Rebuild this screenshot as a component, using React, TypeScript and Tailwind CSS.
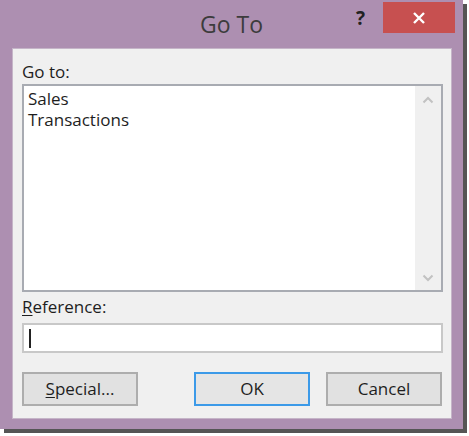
import React from 'react';

const font = { fontFamily: '"Open Sans", "Noto Sans", "Liberation Sans", sans-serif' };

const Chevron = ({ up }: { up?: boolean }) => (
  <svg width="12" height="8" viewBox="0 0 12 8" fill="none">
    <path
      d={up ? 'M1.5 6.5 L6 2 L10.5 6.5' : 'M1.5 1.5 L6 6 L10.5 1.5'}
      stroke="#c2c2c2"
      strokeWidth="2"
    />
  </svg>
);

const DialogButton = ({ children, active }: { children: React.ReactNode; active?: boolean }) => (
  <button
    className={
      active
        ? 'h-[34px] w-[116px] border-2 border-[#3c9ae8] bg-[#e5e5e5] text-[17px] font-medium text-[#1e1e1e]'
        : 'h-[34px] w-[116px] border-2 border-[#adadad] bg-[#e1e1e1] text-[17px] font-medium text-[#1e1e1e]'
    }
  >
    {children}
  </button>
);

export default function App() {
  return (
    <div className="w-[469px] h-[436px] bg-white" style={font}>
      <div className="w-[463px] h-[429px] bg-[#ad8fb1] shadow-[4px_4px_0_#555] flex flex-col">
        {/* Title bar */}
        <div className="relative h-[48px] flex">
          <div className="flex-1 flex items-start justify-center pt-[7px]">
            <span className="text-[23px] text-[#3c3c3c] leading-[34px]">Go To</span>
          </div>
          <div className="absolute left-[356px] top-[4px] text-[19px] font-bold text-[#222]">?</div>
          <div className="absolute left-[383px] top-[2px] w-[72px] h-[31px] bg-[#c75050] flex items-center justify-center">
            <svg width="14" height="14" viewBox="0 0 14 14">
              <path d="M2 2 L12 12 M12 2 L2 12" stroke="#ffffff" strokeWidth="2.4" />
            </svg>
          </div>
        </div>

        {/* Body */}
        <div className="ml-[12px] w-[440px] h-[371px] bg-[#f0f0f0] border border-[#c5b5c8] pl-[9px] pr-[8px] text-[#1e1e1e] font-medium">
          <div className="mt-[12px] h-[23px] text-[17px] leading-[22px]">Go to:</div>
          <div className="h-[208px] border-2 border-[#a8abb2] bg-white flex">
            <div className="flex-1 pl-[4px] pt-[2px] text-[17px] leading-[21px]">
              <div>Sales</div>
              <div>Transactions</div>
            </div>
            <div className="w-[26px] bg-[#f0f0f0] flex flex-col items-center justify-between pt-[10px] pb-[8px]">
              <Chevron up />
              <Chevron />
            </div>
          </div>
          <div className="mt-[4px] h-[27px] text-[17px] leading-[22px]">
            <span className="underline underline-offset-2">R</span>eference:
          </div>
          <div className="h-[30px] border-2 border-[#c8c8c8] bg-white flex items-center pl-[5px]">
            <div className="w-[2px] h-[19px] bg-[#222]" />
          </div>
          <div className="mt-[19px] flex">
            <DialogButton>
              <span className="underline underline-offset-2">S</span>pecial...
            </DialogButton>
            <div className="ml-[56px]">
              <DialogButton active>OK</DialogButton>
            </div>
            <div className="ml-[16px]">
              <DialogButton>Cancel</DialogButton>
            </div>
          </div>
        </div>
      </div>
    </div>
  );
}
